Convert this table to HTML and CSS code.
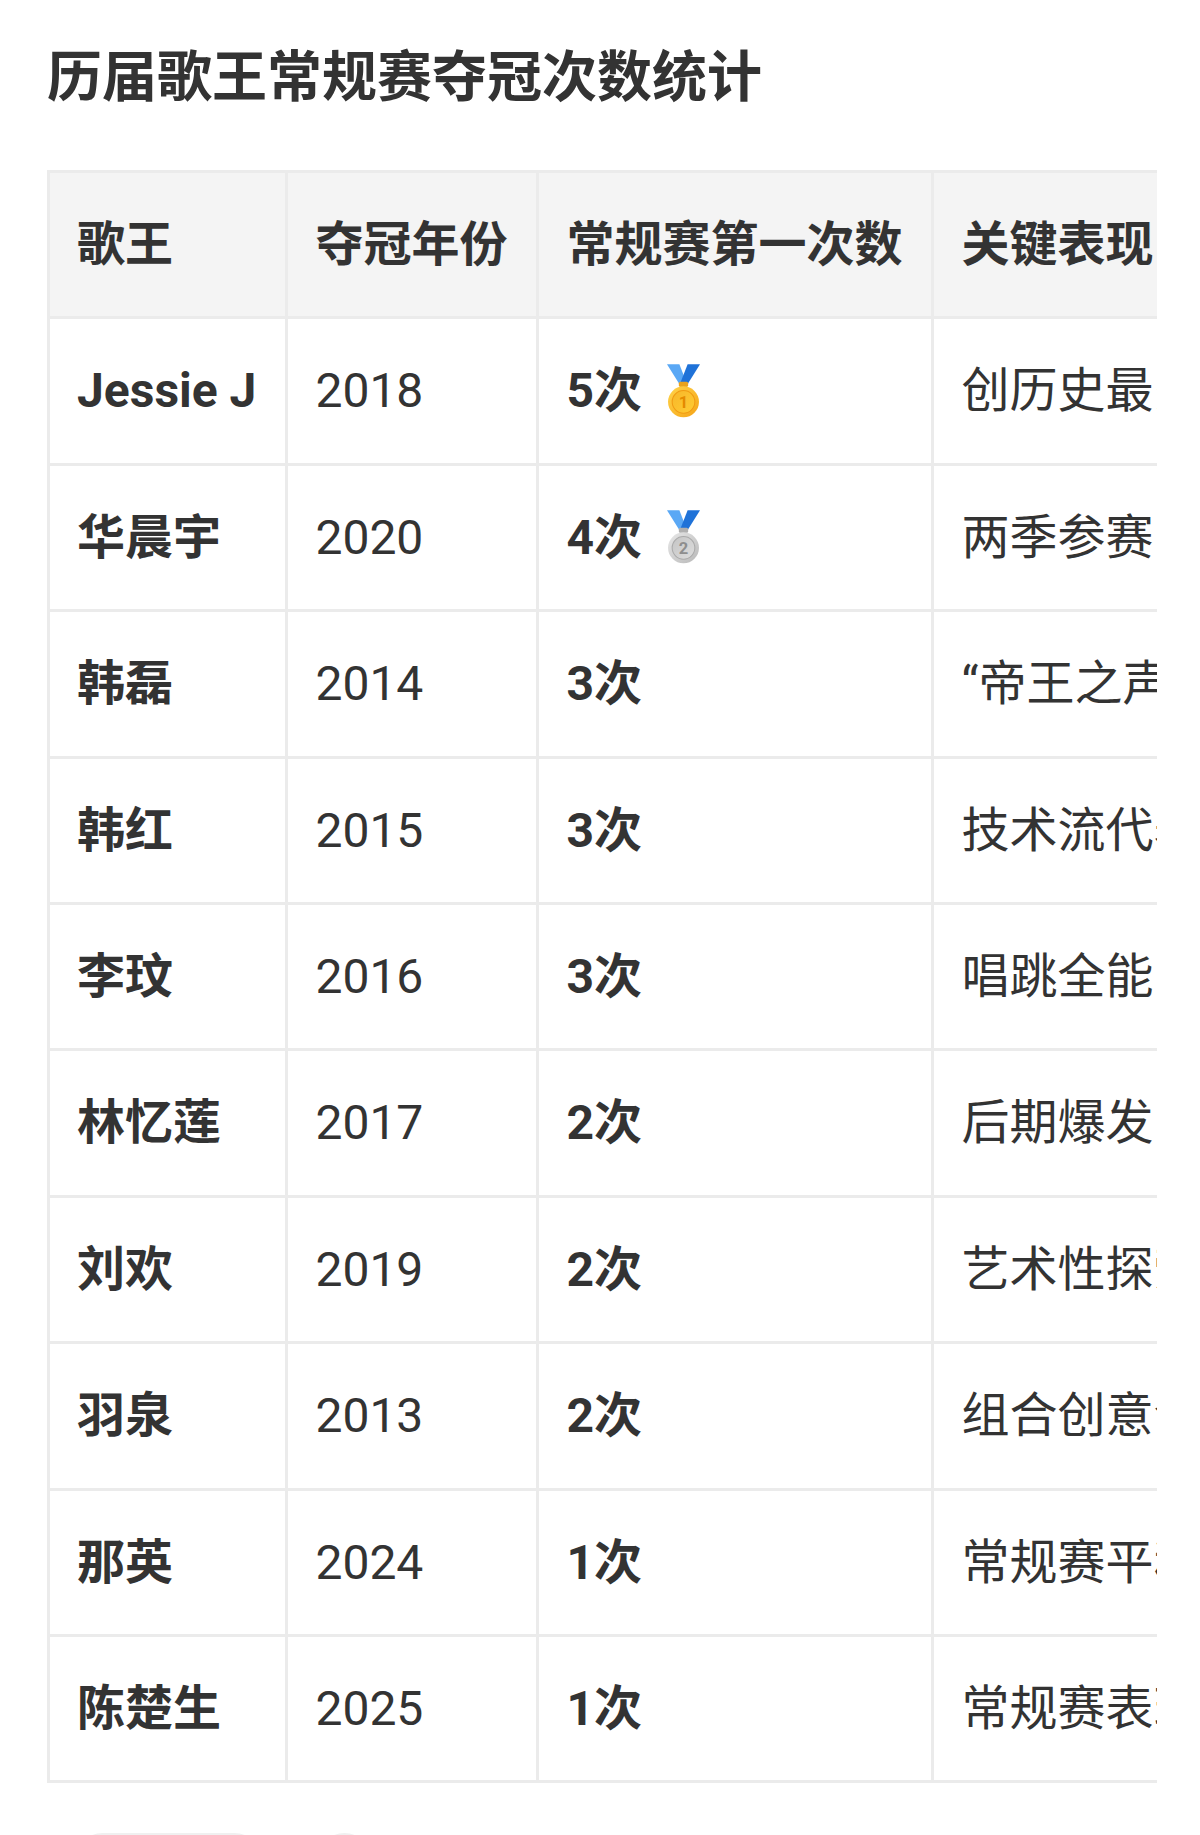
FILE: index.html
```html
<!DOCTYPE html>
<html lang="zh-CN">
<head>
<meta charset="utf-8">
<title>历届歌王常规赛夺冠次数统计</title>
<link rel="stylesheet" href="styles.css">
</head>
<body>
<div class="page">
  <h1 class="title">历届歌王常规赛夺冠次数统计</h1>
  <div class="table-wrap">
    <table class="stats">
      <thead>
        <tr><th>歌王</th><th>夺冠年份</th><th>常规赛第一次数</th><th>关键表现</th></tr>
      </thead>
      <tbody>
        <tr><td class="name">Jessie J</td><td>2018</td><td class="count">5次<svg class="medal" viewBox="0 0 32 52" width="33" height="54" aria-hidden="true"><defs><linearGradient id="g1" x1="0" y1="0" x2="1" y2="1"><stop offset="0" stop-color="#ffd54a"/><stop offset="1" stop-color="#f5a317"/></linearGradient><linearGradient id="g1b" x1="0" y1="0" x2="1" y2="1"><stop offset="0" stop-color="#f7b62a"/><stop offset="1" stop-color="#ffcc33"/></linearGradient></defs><polygon points="0,0 12,0 19,18 13,21" fill="#5aa8f5"/><polygon points="32,0 20,0 13,18 19,21" fill="#1f72d8"/><rect x="11.5" y="17" width="9" height="5" rx="1.5" fill="#e9a21c"/><circle cx="16" cy="36.5" r="15" fill="url(#g1)"/><circle cx="16" cy="36.5" r="11" fill="url(#g1b)" stroke="#f09a12" stroke-width="1"/><text x="16" y="42.5" text-anchor="middle" class="medal-num gold">1</text></svg></td><td>创历史最多周冠纪录</td></tr>
        <tr><td class="name">华晨宇</td><td>2020</td><td class="count">4次<svg class="medal" viewBox="0 0 32 52" width="33" height="54" aria-hidden="true"><defs><linearGradient id="s1" x1="0" y1="0" x2="1" y2="1"><stop offset="0" stop-color="#e8e8e8"/><stop offset="1" stop-color="#b8b8b8"/></linearGradient><linearGradient id="s1b" x1="0" y1="0" x2="1" y2="1"><stop offset="0" stop-color="#c4c4c4"/><stop offset="1" stop-color="#dedede"/></linearGradient></defs><polygon points="0,0 12,0 19,18 13,21" fill="#5aa8f5"/><polygon points="32,0 20,0 13,18 19,21" fill="#1f72d8"/><rect x="11.5" y="17" width="9" height="5" rx="1.5" fill="#b0b0b0"/><circle cx="16" cy="36.5" r="15" fill="url(#s1)"/><circle cx="16" cy="36.5" r="11" fill="url(#s1b)" stroke="#aaaaaa" stroke-width="1"/><text x="16" y="42.5" text-anchor="middle" class="medal-num silver">2</text></svg></td><td>两季参赛，稳定输出</td></tr>
        <tr><td class="name">韩磊</td><td>2014</td><td class="count">3次</td><td>“帝王之声”统治舞台</td></tr>
        <tr><td class="name">韩红</td><td>2015</td><td class="count">3次</td><td>技术流代表人物</td></tr>
        <tr><td class="name">李玟</td><td>2016</td><td class="count">3次</td><td>唱跳全能，舞台震撼</td></tr>
        <tr><td class="name">林忆莲</td><td>2017</td><td class="count">2次</td><td>后期爆发，实力逆袭</td></tr>
        <tr><td class="name">刘欢</td><td>2019</td><td class="count">2次</td><td>艺术性探索突破</td></tr>
        <tr><td class="name">羽泉</td><td>2013</td><td class="count">2次</td><td>组合创意令人惊喜</td></tr>
        <tr><td class="name">那英</td><td>2024</td><td class="count">1次</td><td>常规赛平稳发挥</td></tr>
        <tr><td class="name">陈楚生</td><td>2025</td><td class="count">1次</td><td>常规赛表现稳健</td></tr>
      </tbody>
    </table>
  </div>
  <div class="chips">
    <span class="chip chip-wide"></span>
    <span class="chip chip-small"></span>
  </div>
</div>
</body>
</html>
```

FILE: styles.css
```css
html, body {
  margin: 0;
  padding: 0;
  background: #ffffff;
}

body {
  font-family: Roboto, "Noto Sans CJK SC", "Noto Sans", sans-serif;
  color: #333333;
}

.page {
  padding: 39px 42px 0 47px;
}

.title {
  margin: 0 0 54px 0;
  font-size: 55px;
  line-height: 77px;
  font-weight: 700;
  color: #333333;
  letter-spacing: 0;
}

.table-wrap {
  width: 1110px;
  overflow: hidden;
}

.stats {
  border-collapse: separate;
  border-spacing: 0;
  border-top: 3px solid #ebebeb;
  border-left: 3px solid #ebebeb;
  font-size: 48px;
  white-space: nowrap;
}

.stats th,
.stats td {
  padding: 36px 29px 36px 27px;
  line-height: 71.4px;
  border-right: 3px solid #ebebeb;
  border-bottom: 3px solid #ebebeb;
  text-align: left;
  vertical-align: middle;
}

.stats th {
  background: #f4f4f4;
  font-weight: 700;
}

.stats td {
  font-weight: 400;
}

.stats td.name,
.stats td.count {
  font-weight: 700;
}

.medal {
  margin-left: 25px;
  vertical-align: middle;
  position: relative;
  top: -4px;
}

.medal-num {
  font-family: Roboto, sans-serif;
  font-size: 16px;
  font-weight: 700;
}

.medal-num.gold {
  fill: #e58a00;
}

.medal-num.silver {
  fill: #8e8e8e;
}

.chips {
  display: flex;
  gap: 54px;
  margin-top: 50px;
  padding-left: 26px;
}

.chip {
  display: block;
  height: 60px;
  border-radius: 30px;
  background: #f0f0f0;
}

.chip-wide {
  width: 191px;
}

.chip-small {
  width: 53px;
}
```
